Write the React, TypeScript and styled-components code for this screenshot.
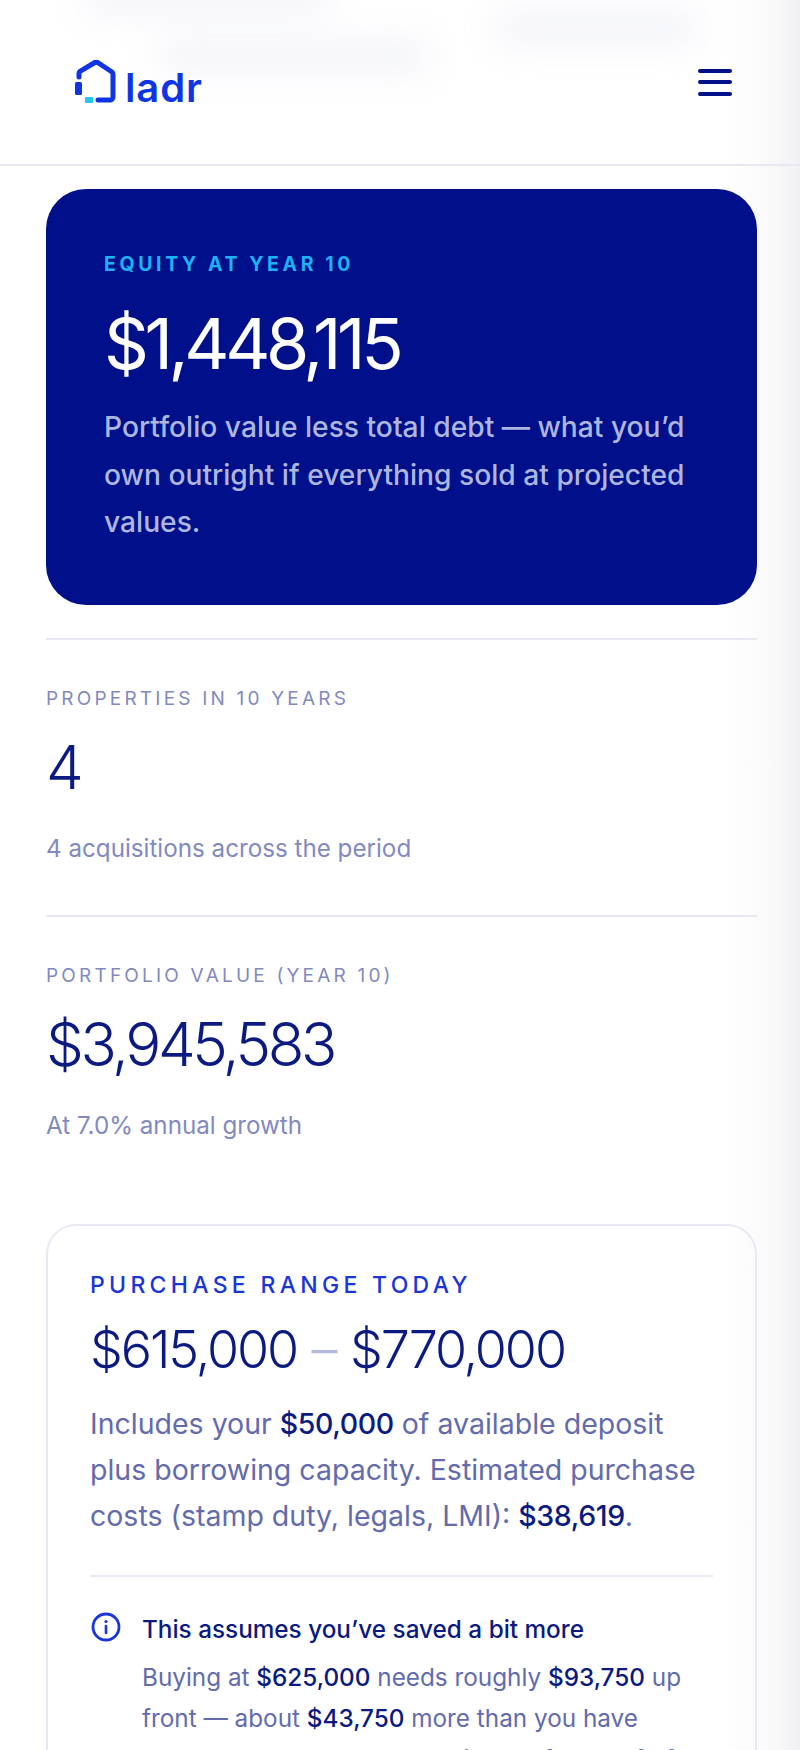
import styled, { createGlobalStyle } from "styled-components";

const GlobalStyle = createGlobalStyle`
  html, body {
    margin: 0;
    padding: 0;
    background: #fff;
  }
  body {
    font-family: "Inter", "Noto Sans", sans-serif;
    height: 1750px;
    overflow: hidden;
  }
`;

export default function App() {
  return (
    <Page>
      <GlobalStyle />
      <EdgeShade />
      <Header>
        <Smudge $left={84} $top={-14} $width={246} $height={26} />
        <Smudge $left={160} $top={42} $width={270} $height={28} />
        <Smudge $left={495} $top={14} $width={205} $height={28} />
        <LogoLink>
          <svg width="44" height="44" viewBox="0 0 44 44" fill="none">
            <path
              d="M5 17V13.5a3 3 0 0 1 1-2.2L20 3a3.5 3.5 0 0 1 4.5 0L38 12a3 3 0 0 1 1 2.3V37a3 3 0 0 1-3 3H24"
              stroke="#0f34e6"
              strokeWidth="5"
              strokeLinejoin="round"
              strokeLinecap="round"
            />
            <rect x="1" y="22" width="7" height="13" rx="1.5" fill="#0f34e6" />
            <rect x="11" y="37" width="8" height="6" rx="1" fill="#25c4f5" />
          </svg>
          <LogoText>ladr</LogoText>
        </LogoLink>
        <MenuButton aria-label="Open menu">
          <MenuLine />
          <MenuLine />
          <MenuLine />
        </MenuButton>
      </Header>

      <Content>
        <HeroCard>
          <HeroLabel>Equity at year 10</HeroLabel>
          <HeroValue>$1,448,115</HeroValue>
          <HeroText>
            Portfolio value less total debt — what you’d own outright if everything sold at
            projected values.
          </HeroText>
        </HeroCard>

        <Stat>
          <StatLabel>Properties in 10 years</StatLabel>
          <StatValue>4</StatValue>
          <StatNote>4 acquisitions across the period</StatNote>
        </Stat>
        <Stat>
          <StatLabel>Portfolio value (year 10)</StatLabel>
          <StatValue>$3,945,583</StatValue>
          <StatNote>At 7.0% annual growth</StatNote>
        </Stat>

        <RangeCard>
          <RangeLabel>Purchase range today</RangeLabel>
          <RangeValue>
            $615,000 <RangeDash>–</RangeDash> $770,000
          </RangeValue>
          <RangeText>
            Includes your <strong>$50,000</strong> of available deposit plus borrowing capacity.
            Estimated purchase costs (stamp duty, legals, LMI): <strong>$38,619</strong>.
          </RangeText>
          <Notice>
            <svg width="32" height="32" viewBox="0 0 32 32" fill="none">
              <circle cx="16" cy="16" r="13" stroke="#1a35d8" strokeWidth="2.8" />
              <path d="M16 15v7" stroke="#1a35d8" strokeWidth="2.6" strokeLinecap="round" />
              <circle cx="16" cy="10.5" r="1.6" fill="#1a35d8" />
            </svg>
            <div>
              <NoticeTitle>This assumes you’ve saved a bit more</NoticeTitle>
              <NoticeText>
                Buying at <strong>$625,000</strong> needs roughly <strong>$93,750</strong> up front
                — about <strong>$43,750</strong> more than you have saved today, and a lender will
                look for proof of savings.
              </NoticeText>
            </div>
          </Notice>
        </RangeCard>
      </Content>
    </Page>
  );
}

const Page = styled.div`
  position: relative;
  width: 800px;
  height: 1750px;
  overflow: hidden;
  background: #fff;
  color: #0b1a80;
`;

const Header = styled.header`
  position: relative;
  height: 166px;
  padding: 0 68px 0 74px;
  box-sizing: border-box;
  display: flex;
  align-items: center;
  justify-content: space-between;
  border-bottom: 2px solid #e6e8f2;
  overflow: hidden;
`;

const Smudge = styled.div<{ $left: number; $top: number; $width: number; $height: number }>`
  position: absolute;
  left: ${({ $left }) => $left}px;
  top: ${({ $top }) => $top}px;
  width: ${({ $width }) => $width}px;
  height: ${({ $height }) => $height}px;
  background: #f1f2f8;
  filter: blur(18px);
`;

const LogoLink = styled.a`
  position: relative;
  display: flex;
  align-items: flex-end;
  gap: 7px;
`;

const LogoText = styled.span`
  margin-bottom: -2px;
  font-size: 40px;
  line-height: 36px;
  font-weight: 600;
  letter-spacing: 0.9px;
  color: #0f34e6;
`;

const MenuButton = styled.button`
  position: relative;
  display: flex;
  flex-direction: column;
  gap: 7.5px;
  width: 34px;
  padding: 0;
  border: 0;
  background: none;
`;

const MenuLine = styled.span`
  display: block;
  height: 4px;
  border-radius: 2px;
  background: #00108a;
`;

const Content = styled.main`
  position: relative;
  padding: 23px 43px 0 46px;
`;

const HeroCard = styled.section`
  background: #00108a;
  border-radius: 40px;
  padding: 63px 58px 58px;
  height: 416px;
  box-sizing: border-box;
  margin-bottom: 33px;
`;

const HeroLabel = styled.div`
  font-size: 19.5px;
  line-height: 24px;
  font-weight: 700;
  letter-spacing: 3.6px;
  text-transform: uppercase;
  color: #1fb0f5;
`;

const HeroValue = styled.div`
  margin-top: 24px;
  font-size: 70px;
  line-height: 88px;
  font-weight: 400;
  letter-spacing: -4.4px;
  color: #fff;
`;

const HeroText = styled.p`
  margin: 16px 0 0;
  font-size: 28.2px;
  line-height: 47.5px;
  font-weight: 500;
  color: #aeb6de;
`;

const Stat = styled.section`
  border-top: 2px solid #e6e8f2;
  height: 276.5px;
  padding-top: 47px;
  box-sizing: border-box;
`;

const StatLabel = styled.div`
  font-size: 19px;
  line-height: 24px;
  letter-spacing: 3.2px;
  text-transform: uppercase;
  color: #8289bf;
`;

const StatValue = styled.div`
  margin-top: 18px;
  font-size: 60px;
  line-height: 76px;
  font-weight: 300;
  letter-spacing: -3.4px;
  color: #0b1a80;
`;

const StatNote = styled.div`
  margin-top: 26px;
  font-size: 24.2px;
  line-height: 36px;
  color: #8289bf;
`;

const RangeCard = styled.section`
  border: 2px solid #e8e9f4;
  border-radius: 30px;
  margin-top: 33px;
  padding: 44px 42px 0;
  height: 700px;
`;

const RangeLabel = styled.div`
  font-size: 23px;
  line-height: 30px;
  font-weight: 500;
  letter-spacing: 4.3px;
  text-transform: uppercase;
  color: #1a35d8;
`;

const RangeValue = styled.div`
  margin-top: 16px;
  font-size: 52px;
  line-height: 68px;
  font-weight: 300;
  letter-spacing: -2.1px;
  color: #0b1a80;
`;

const RangeDash = styled.span`
  margin: 0 2px;
  color: #b4bade;
`;

const RangeText = styled.p`
  margin: 17px 0 0;
  font-size: 28.5px;
  line-height: 46px;
  color: #636bad;

  strong {
    font-weight: 500;
    letter-spacing: -0.4px;
    color: #0b1a80;
  }
`;

const Notice = styled.div`
  display: grid;
  grid-template-columns: 32px 1fr;
  column-gap: 20px;
  margin-top: 36px;
  padding-top: 34px;
  border-top: 2px solid #e8e9f4;
`;

const NoticeTitle = styled.div`
  font-size: 24.3px;
  line-height: 36px;
  font-weight: 500;
  color: #0b1a80;
`;

const NoticeText = styled.p`
  margin: 10px 0 0;
  font-size: 24.3px;
  line-height: 41px;
  color: #636bad;

  strong {
    font-weight: 500;
    color: #0b1a80;
  }
`;

const EdgeShade = styled.div`
  position: absolute;
  top: 0;
  right: 0;
  bottom: 0;
  width: 70px;
  background: linear-gradient(
    to right,
    rgba(241, 241, 244, 0),
    rgba(241, 241, 244, 0.45) 60%,
    rgba(241, 241, 244, 1)
  );
  pointer-events: none;
`;
